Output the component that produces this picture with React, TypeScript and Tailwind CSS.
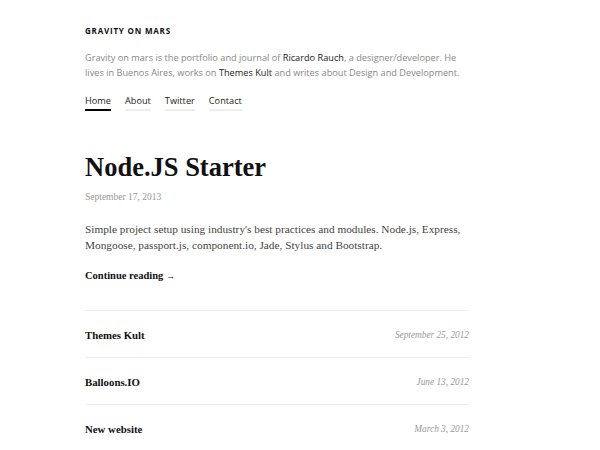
import React from "react";

const serif = { fontFamily: '"Liberation Serif", "DejaVu Serif", serif' };
const sans = { fontFamily: '"Open Sans", "Liberation Sans", sans-serif' };

const posts = [
  { title: "Themes Kult", date: "September 25, 2012" },
  { title: "Balloons.IO", date: "June 13, 2012" },
  { title: "New website", date: "March 3, 2012" },
];

export default function App() {
  return (
    <div className="min-h-[450px] bg-white">
      <div className="ml-[85px] w-[384px] pt-[25px]">
        <header style={sans}>
          <h1 className="text-[8px] font-bold tracking-[0.1em] text-[#111] leading-[12px]">
            GRAVITY ON MARS
          </h1>
          <p className="mt-[12.5px] text-[9.2px] leading-[15px] text-[#888]">
            Gravity on mars is the portfolio and journal of{" "}
            <span className="text-[#222]">Ricardo Rauch</span>, a designer/developer. He lives in
            Buenos Aires, works on <span className="text-[#222]">Themes Kult</span> and writes about
            Design and Development.
          </p>
          <nav className="mt-[13px] flex gap-[14px] text-[9.2px] leading-[15px] text-[#222]">
            <span className="border-b-2 border-black pb-[1px]">Home</span>
            <span className="border-b-2 border-[#eee] pb-[1px]">About</span>
            <span className="border-b-2 border-[#eee] pb-[1px]">Twitter</span>
            <span className="border-b-2 border-[#eee] pb-[1px]">Contact</span>
          </nav>
        </header>

        <article className="mt-[39px]" style={serif}>
          <h2 className="text-[26.5px] font-bold leading-[34px] text-[#111]">Node.JS Starter</h2>
          <div className="mt-[6px] text-[9.5px] leading-[14px] text-[#999]">September 17, 2013</div>
          <p className="mt-[17px] text-[11.3px] leading-[16px] text-[#444]">
            Simple project setup using industry's best practices and modules. Node.js, Express,
            Mongoose, passport.js, component.io, Jade, Stylus and Bootstrap.
          </p>
          <div className="mt-[15px] text-[10.5px] font-bold leading-[16px] text-[#111]">
            Continue reading <span className="text-[9px]">→</span>
          </div>
        </article>

        <ul className="mt-[26px]" style={serif}>
          {posts.map((p) => (
            <li
              key={p.title}
              className="flex items-center justify-between border-t border-[#eee] pt-[16px] pb-[14px] leading-[16px]"
            >
              <span className="text-[10.8px] font-bold text-[#111]">{p.title}</span>
              <span className="text-[9.3px] italic text-[#999]">{p.date}</span>
            </li>
          ))}
        </ul>
      </div>
    </div>
  );
}
